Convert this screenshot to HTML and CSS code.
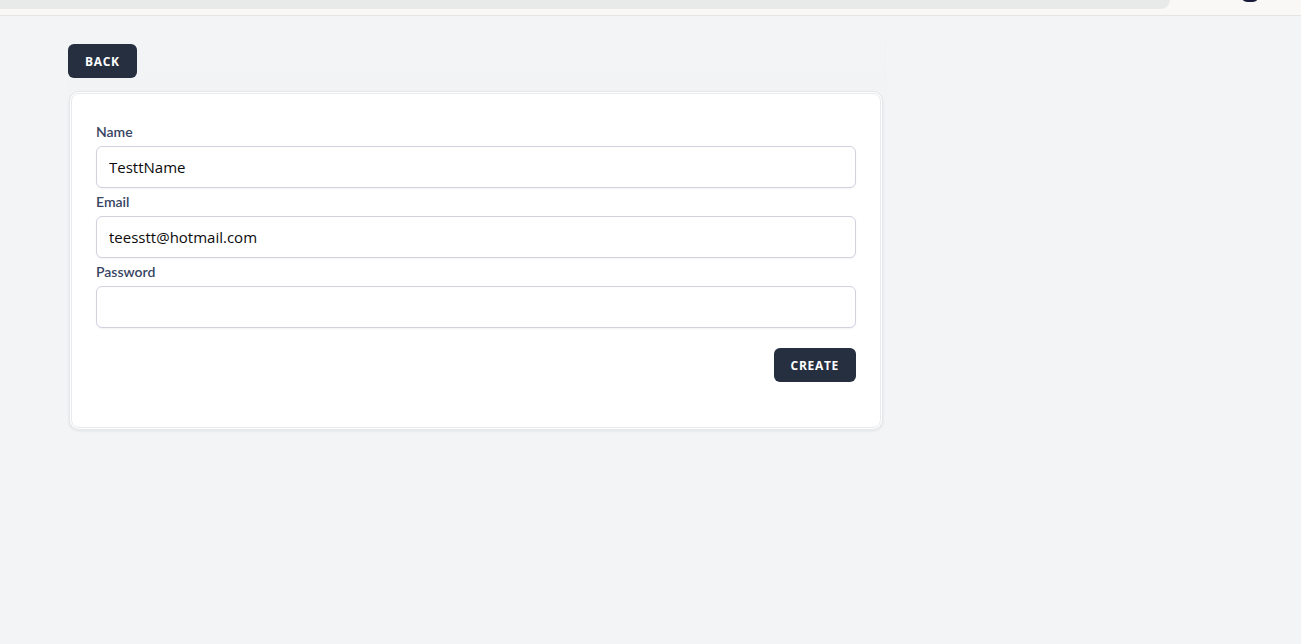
FILE: index.html
```html
<!DOCTYPE html>
<html lang="en">
<head>
    <meta charset="UTF-8">
    <meta name="viewport" content="width=device-width, initial-scale=1.0">
    <title>Create User</title>
    <link rel="stylesheet" href="styles.css">
</head>
<body>
<!-- Cropped browser strip at the top -->
<div class="topbar">
    <div class="topbar-pill"></div>
    <div class="topbar-dot"></div>
</div>

<div class="content">
    <div class="header-row">
        <button class="btn" type="button">Back</button>
    </div>

    <div class="card">
        <form class="card-inner">
            <div class="field">
                <label for="name">Name</label>
                <input type="text" id="name" value="TesttName">
            </div>
            <div class="field">
                <label for="email">Email</label>
                <input type="text" id="email" value="teesstt@hotmail.com">
            </div>
            <div class="field">
                <label for="password">Password</label>
                <input type="password" id="password">
            </div>
            <div class="actions">
                <button class="btn" type="button">Create</button>
            </div>
        </form>
    </div>
</div>
</body>
</html>
```

FILE: styles.css
```css
* {
    box-sizing: border-box;
}

html,
body {
    height: 100%;
}

body {
    margin: 0;
    font-family: "Lato", sans-serif;
    background-color: #f3f4f6;
    overflow: hidden;
}

.topbar {
    height: 16px;
    display: flex;
    justify-content: space-between;
    align-items: flex-start;
    background-color: #faf8f6;
    border-bottom: 1px solid #e4e4e4;
    padding-right: 44px;
}

.topbar-pill {
    width: 1170px;
    height: 9px;
    background-color: #e8eaea;
    border-bottom-right-radius: 14px;
}

.topbar-dot {
    width: 14px;
    height: 2px;
    background-color: #1a1a3a;
    border-radius: 0 0 7px 7px / 0 0 2px 2px;
}

.content {
    width: 817px;
    margin-left: 68px;
    padding-top: 22px;
}

.header-row {
    height: 53px;
    padding-top: 6px;
    background: linear-gradient(#f3f4f6, #f2f3f5);
    box-shadow: 1px 0 0 #f1f2f4, -1px 0 0 #f1f2f4;
}

.btn {
    display: block;
    height: 34px;
    padding: 0 17px;
    border: none;
    border-radius: 6px;
    background-color: #252f40;
    color: #fff;
    font-family: "Open Sans", sans-serif;
    font-size: 12px;
    font-weight: 700;
    letter-spacing: 0.7px;
    text-transform: uppercase;
    cursor: pointer;
}

/* two thin rings with a white gap between them */
.card {
    width: 814px;
    height: 339px;
    margin-left: 1px;
    padding: 1px;
    background-color: #fff;
    border: 1px solid #e6e7eb;
    border-radius: 10px;
    box-shadow: 0 1px 3px rgba(0, 0, 0, 0.08);
}

.card-inner {
    height: 100%;
    padding: 30px 24px 0;
    border: 1px solid #e9eaee;
    border-radius: 8px;
}

.field {
    display: flex;
    flex-direction: column;
    height: 70px;
}

.field label {
    height: 22px;
    line-height: 16px;
    font-size: 14px;
    font-weight: 600;
    color: #374462;
}

.field input {
    width: 100%;
    height: 42px;
    padding: 0 12px;
    border: 1px solid #d1d2de;
    border-radius: 6px;
    background-color: #fff;
    box-shadow: 0 1px 2px rgba(0, 0, 0, 0.05);
    color: #0b0b0b;
    font-family: "Open Sans", sans-serif;
    font-size: 15px;
    outline: none;
}

.actions {
    display: flex;
    justify-content: flex-end;
    margin-top: 14px;
}
```
